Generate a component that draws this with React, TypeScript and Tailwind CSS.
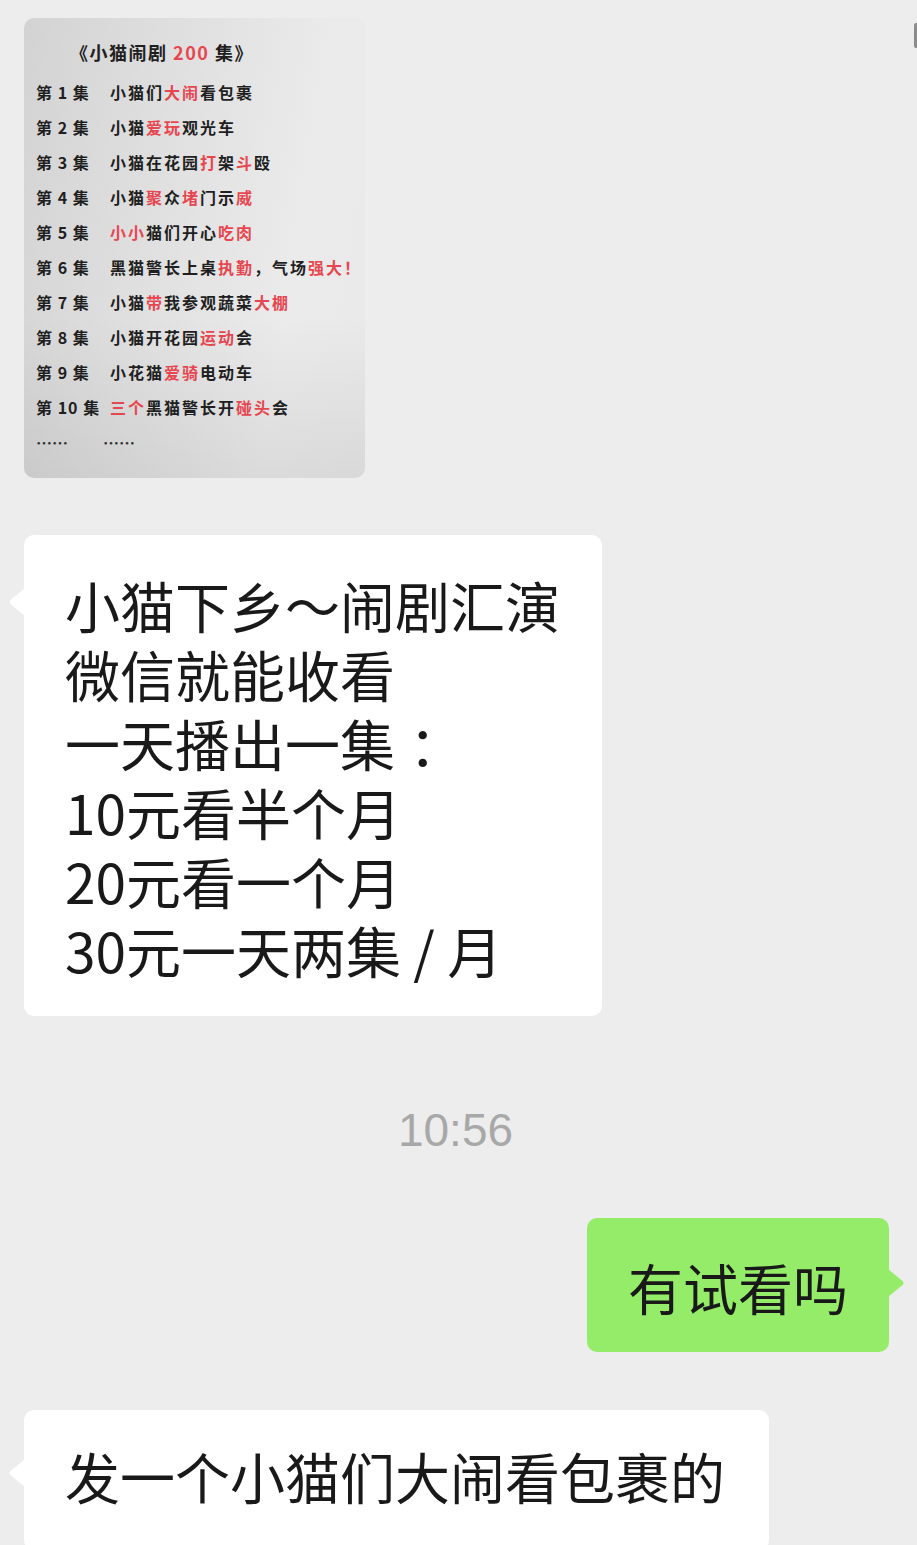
import React from "react";

const cjk = { fontFamily: '"Noto Sans CJK SC", "Noto Sans", sans-serif' };

type Part = string | { r: string };

const episodes: { label: string; parts: Part[] }[] = [
  { label: "第 1 集", parts: ["小猫们", { r: "大闹" }, "看包裹"] },
  { label: "第 2 集", parts: ["小猫", { r: "爱玩" }, "观光车"] },
  { label: "第 3 集", parts: ["小猫在花园", { r: "打" }, "架", { r: "斗" }, "殴"] },
  { label: "第 4 集", parts: ["小猫", { r: "聚" }, "众", { r: "堵" }, "门示", { r: "威" }] },
  { label: "第 5 集", parts: [{ r: "小小" }, "猫们开心", { r: "吃肉" }] },
  { label: "第 6 集", parts: ["黑猫警长上桌", { r: "执勤" }, "，气场", { r: "强大！" }] },
  { label: "第 7 集", parts: ["小猫", { r: "带" }, "我参观蔬菜", { r: "大棚" }] },
  { label: "第 8 集", parts: ["小猫开花园", { r: "运动" }, "会"] },
  { label: "第 9 集", parts: ["小花猫", { r: "爱骑" }, "电动车"] },
  { label: "第 10 集", parts: [{ r: "三个" }, "黑猫警长开", { r: "碰头" }, "会"] },
];

const ImageCard = () => (
  <div
    className="w-[341px] h-[460px] self-start rounded-[10px] overflow-hidden bg-[linear-gradient(to_top,rgba(0,0,0,0.07),transparent_35%),linear-gradient(100deg,#d3d3d3,#e0e0e0_40%,#ebebeb_75%,#e9e9e9)] font-bold text-[#1f1f1f]"
    style={cjk}
  >
    <div className="pt-[17px] pl-[46px] text-[18px] leading-[35px] tracking-[1.5px] whitespace-nowrap">
      《小猫闹剧 <span className="text-[#e6464f]">200</span> 集》
    </div>
    <div className="mt-[5px] pl-[12px] text-[16px] leading-[35px] whitespace-nowrap">
      {episodes.map((ep) => (
        <div key={ep.label} className="flex">
          <span className="w-[74px] shrink-0 tracking-[1px]">{ep.label}</span>
          <span className="tracking-[2px]">
            {ep.parts.map((p, i) =>
              typeof p === "string" ? (
                <span key={i}>{p}</span>
              ) : (
                <span key={i} className="text-[#e6464f]">
                  {p.r}
                </span>
              )
            )}
          </span>
        </div>
      ))}
      <div className="flex text-[16px] text-[#333]">
        <span className="w-[67px] shrink-0">……</span>
        <span>……</span>
      </div>
    </div>
  </div>
);

const LeftArrow = ({ fill, top }: { fill: string; top: number }) => (
  <svg
    width="17"
    height="28"
    viewBox="0 0 17 28"
    className="absolute left-[-16px]"
    style={{ top }}
  >
    <path d="M17 0 L2.5 12 Q0.5 14 2.5 16 L17 28 Z" fill={fill} />
  </svg>
);

const RightArrow = ({ fill, top }: { fill: string; top: number }) => (
  <svg
    width="17"
    height="28"
    viewBox="0 0 17 28"
    className="absolute right-[-16px]"
    style={{ top }}
  >
    <path d="M0 0 L14.5 12 Q16.5 14 14.5 16 L0 28 Z" fill={fill} />
  </svg>
);

export default function App() {
  return (
    <div className="relative w-[917px] h-[1545px] overflow-hidden bg-[#ededed]">
      {/* cut-off item at the right edge */}
      <div className="absolute right-0 top-[23px] w-[3px] h-[25px] rounded-l-[2px] bg-[#8c8c8c]" />

      <div className="flex flex-col pt-[18px] px-[24px] text-[#191919]" style={cjk}>
        <ImageCard />

        <div className="relative self-start mt-[57px] rounded-[10px] bg-white pl-[41px] pr-[42px] pt-[35px] pb-[32px] text-[55px] leading-[69px] whitespace-nowrap">
          <LeftArrow fill="#ffffff" top={53} />
          <div>小猫下乡～闹剧汇演</div>
          <div>微信就能收看</div>
          <div>
            一天播出一集<span className="pl-[14px]">：</span>
          </div>
          <div>10元看半个月</div>
          <div>20元看一个月</div>
          <div>30元一天两集 / 月</div>
        </div>

        <div
          className="mt-[86px] pr-[6px] text-center text-[46px] leading-[56px] text-[#a8a8a8]"
          style={{ fontFamily: '"Liberation Sans", Arial, sans-serif' }}
        >
          10:56
        </div>

        <div className="relative self-end mr-[4px] mt-[60px] rounded-[10px] bg-[#95ec69] px-[41px] pt-[34px] pb-[31px] text-[55px] leading-[69px] whitespace-nowrap">
          <RightArrow fill="#95ec69" top={51} />
          有试看吗
        </div>

        <div className="relative self-start mt-[58px] rounded-[10px] bg-white pl-[41px] pr-[44px] pt-[31px] pb-[40px] text-[55px] leading-[69px] whitespace-nowrap">
          <LeftArrow fill="#ffffff" top={49} />
          发一个小猫们大闹看包裹的
        </div>
      </div>
    </div>
  );
}
